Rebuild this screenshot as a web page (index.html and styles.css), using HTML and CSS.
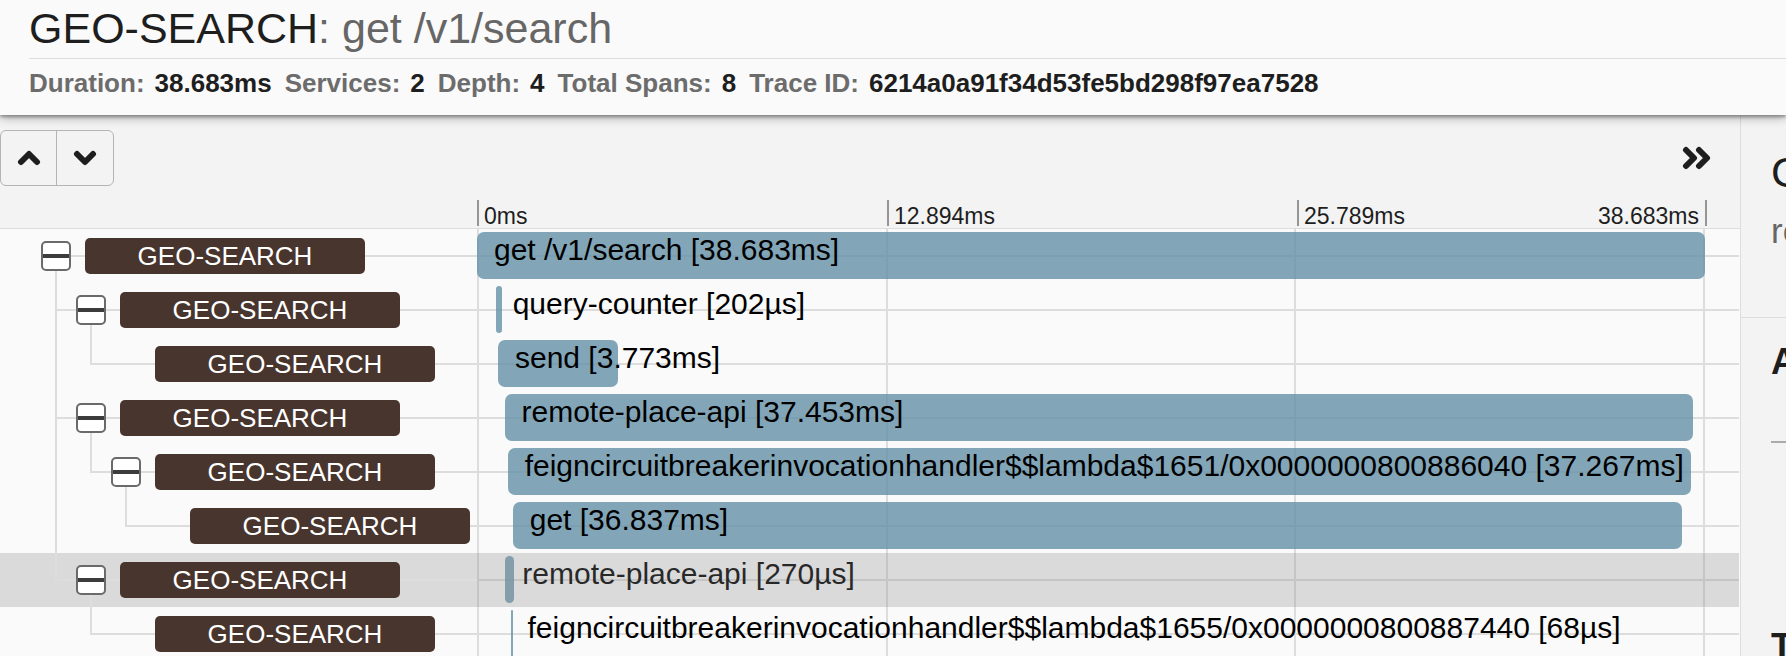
FILE: index.html
```html
<!DOCTYPE html>
<html lang="en">
<head>
<meta charset="utf-8">
<title>GEO-SEARCH: get /v1/search</title>
<link rel="stylesheet" href="styles.css">
</head>
<body>
<header class="header">
  <h1 class="title">GEO-SEARCH<span class="title-span">: get /v1/search</span></h1>
  <dl class="meta">
    <div class="meta-item"><dt>Duration:</dt><dd>38.683ms</dd></div>
    <div class="meta-item"><dt>Services:</dt><dd>2</dd></div>
    <div class="meta-item"><dt>Depth:</dt><dd>4</dd></div>
    <div class="meta-item"><dt>Total Spans:</dt><dd>8</dd></div>
    <div class="meta-item"><dt>Trace ID:</dt><dd>6214a0a91f34d53fe5bd298f97ea7528</dd></div>
  </dl>
</header>
<div class="content">
  <main class="trace">
    <div class="toolbar">
      <div class="button-group">
        <button class="step" type="button" aria-label="Previous span"><svg width="24" height="20" viewBox="0 0 24 20"><path d="M4 14L12 6L20 14"/></svg></button>
        <button class="step" type="button" aria-label="Next span"><svg width="24" height="20" viewBox="0 0 24 20"><path d="M4 6L12 14L20 6"/></svg></button>
      </div>
      <button class="collapse" type="button" aria-label="Hide details"><svg width="30" height="24" viewBox="0 0 30 24"><path d="M4 4L12 12L4 20M17 4L25 12L17 20"/></svg></button>
    </div>
    <div class="scale">
      <div class="ticks">
        <span class="tick">0ms</span>
        <span class="tick">12.894ms</span>
        <span class="tick tick-end"><span>25.789ms</span><span>38.683ms</span></span>
      </div>
    </div>
    <div class="rows">
      <div class="row">
        <div class="tree"><span class="node parent"><button class="toggle" type="button" aria-label="Collapse"></button></span><span class="service">GEO-SEARCH</span><span class="rule"></span></div>
        <div class="timeline"><div class="track"><div class="bar" style="margin-left:0%;width:100%"><span class="name">get /v1/search [38.683ms]</span></div></div></div>
      </div>
      <div class="row">
        <div class="tree"><span class="guide tee"></span><span class="node parent"><button class="toggle" type="button" aria-label="Collapse"></button></span><span class="service">GEO-SEARCH</span><span class="rule"></span></div>
        <div class="timeline"><div class="track"><div class="bar" style="margin-left:1.52%;width:.52%"><span class="name">query-counter [202µs]</span></div></div></div>
      </div>
      <div class="row">
        <div class="tree"><span class="guide line"></span><span class="guide elbow"></span><span class="node"></span><span class="service">GEO-SEARCH</span><span class="rule"></span></div>
        <div class="timeline"><div class="track"><div class="bar" style="margin-left:1.71%;width:9.75%"><span class="name">send [3.773ms]</span></div></div></div>
      </div>
      <div class="row">
        <div class="tree"><span class="guide tee"></span><span class="node parent"><button class="toggle" type="button" aria-label="Collapse"></button></span><span class="service">GEO-SEARCH</span><span class="rule"></span></div>
        <div class="timeline"><div class="track"><div class="bar" style="margin-left:2.24%;width:96.82%"><span class="name">remote-place-api [37.453ms]</span></div></div></div>
      </div>
      <div class="row">
        <div class="tree"><span class="guide line"></span><span class="guide elbow"></span><span class="node parent"><button class="toggle" type="button" aria-label="Collapse"></button></span><span class="service">GEO-SEARCH</span><span class="rule"></span></div>
        <div class="timeline"><div class="track"><div class="bar" style="margin-left:2.5%;width:96.34%"><span class="name">feigncircuitbreakerinvocationhandler$$lambda$1651/0x0000000800886040 [37.267ms]</span></div></div></div>
      </div>
      <div class="row">
        <div class="tree"><span class="guide line"></span><span class="guide"></span><span class="guide elbow"></span><span class="node"></span><span class="service">GEO-SEARCH</span><span class="rule"></span></div>
        <div class="timeline"><div class="track"><div class="bar" style="margin-left:2.91%;width:95.23%"><span class="name">get [36.837ms]</span></div></div></div>
      </div>
      <div class="row selected">
        <div class="tree"><span class="guide elbow"></span><span class="node parent"><button class="toggle" type="button" aria-label="Collapse"></button></span><span class="service">GEO-SEARCH</span><span class="rule"></span></div>
        <div class="timeline"><div class="track"><div class="bar" style="margin-left:2.31%;width:.7%"><span class="name">remote-place-api [270µs]</span></div></div></div>
      </div>
      <div class="row">
        <div class="tree"><span class="guide"></span><span class="guide elbow"></span><span class="node"></span><span class="service">GEO-SEARCH</span><span class="rule"></span></div>
        <div class="timeline"><div class="track"><div class="bar" style="margin-left:2.73%;width:.24%"><span class="name">feigncircuitbreakerinvocationhandler$$lambda$1655/0x0000000800887440 [68µs]</span></div></div></div>
      </div>
    </div>
  </main>
  <aside class="detail">
    <div class="detail-head">
      <h2 class="detail-service">GEO-SEARCH</h2>
      <p class="detail-span">remote-place-api</p>
    </div>
    <section class="annotations"><h3>Annotations</h3></section>
    <section class="tags"><h3>Tags</h3></section>
  </aside>
</div>
</body>
</html>
```
FILE: styles.css
```css
* { box-sizing: border-box; }
body {
  margin: 0;
  height: 100vh;
  display: flex;
  flex-direction: column;
  overflow: hidden;
  background: #f3f3f3;
  color: #1e1e1e;
  font-family: "Liberation Sans", Arial, sans-serif;
}
h1, h2, h3, p, dl, dd { margin: 0; font-weight: 400; }
button { padding: 0; border: 0; background: none; color: inherit; font: inherit; }
svg { display: block; fill: none; stroke: #1e1e1e; stroke-linecap: round; stroke-linejoin: round; stroke-width: 6px; }

.header {
  position: relative;
  z-index: 2;
  flex: none;
  padding: 3px 0 17px 29px;
  background: #fafafa;
  box-shadow: 0 2px 3px rgba(0, 0, 0, .3), 0 2px 10px rgba(0, 0, 0, .35);
}
.title { padding-bottom: 5px; border-bottom: 1px solid #ddd; font-size: 43px; line-height: 50px; white-space: nowrap; }
.title-span { color: #666; }
.meta { display: flex; gap: 13px; padding-top: 9px; font-size: 26px; line-height: 30px; white-space: nowrap; }
.meta-item { display: flex; gap: 10px; font-weight: 700; }
.meta-item dt { color: #6c6c6c; }
.meta-item dd { font-weight: 700; }

.content { flex: 1; display: flex; min-height: 0; }
.trace { flex: 1; min-width: 0; display: flex; flex-direction: column; }
.toolbar { flex: none; display: flex; justify-content: space-between; align-items: center; padding: 15px 28px 14px 0; }
.button-group { display: flex; border: 1px solid #b4b4b4; border-radius: 6px; }
.step { display: grid; place-items: center; width: 55px; height: 54px; }
.step + .step { width: 57px; border-left: 1px solid #b4b4b4; }
.collapse { display: grid; place-items: center; }

.scale { flex: none; padding: 0 33px 2px 477px; border-bottom: 1px solid #ddd; }
.ticks { display: grid; grid-template-columns: repeat(3, 1fr); font-size: 23px; line-height: 23px; }
.tick { height: 26px; padding: 5px 0 0 5px; border-left: 2px solid #959595; }
.tick-end { display: flex; justify-content: space-between; padding-right: 6px; border-right: 2px solid #959595; }

.rows { flex: 1; min-height: 0; overflow: hidden; padding-right: 1px; background: #fafafa; }
.row { display: flex; height: 54px; }
.tree { flex: none; display: flex; align-items: center; width: 477px; padding-left: 55px; }
.guide { flex: none; width: 35px; height: 54px; }
.guide.line, .guide.tee { border-left: 2px solid #ddd; }
.guide.tee { background: linear-gradient(#ddd, #ddd) 0 26px / 100% 2px no-repeat; }
.guide.elbow {
  background:
    linear-gradient(#ddd, #ddd) 0 0 / 2px 28px no-repeat,
    linear-gradient(#ddd, #ddd) 0 26px / 100% 2px no-repeat;
}
.node { flex: none; display: flex; align-items: center; width: 30px; height: 54px; background: linear-gradient(#ddd, #ddd) 0 26px / 100% 2px no-repeat; }
.node.parent {
  background:
    linear-gradient(#ddd, #ddd) 0 26px / 100% 2px no-repeat,
    linear-gradient(#ddd, #ddd) 0 28px / 2px 26px no-repeat;
}
.toggle {
  flex: none;
  width: 30px;
  height: 30px;
  margin-left: -14px;
  border: 2px solid #6a6a6a;
  border-radius: 5px;
  background: linear-gradient(#3c3c3c, #3c3c3c) 0 11px / 100% 4px no-repeat #fff;
}
.service { flex: none; width: 280px; height: 36px; border-radius: 5px; background: #48352e; color: #fff; font-size: 26px; line-height: 36px; text-align: center; }
.rule { flex: 1; height: 2px; background: #ddd; }

.timeline {
  position: relative;
  flex: 1;
  min-width: 0;
  padding-right: 34px;
  background: linear-gradient(#ddd, #ddd) 0 26px / 100% 2px no-repeat;
}
.track {
  height: 54px;
  padding-top: 3px;
  background:
    linear-gradient(#ddd, #ddd) 0 0 / 2px 100% no-repeat,
    linear-gradient(#ddd, #ddd) 33.333% 0 / 2px 100% no-repeat,
    linear-gradient(#ddd, #ddd) 66.667% 0 / 2px 100% no-repeat,
    linear-gradient(#ddd, #ddd) 100% 0 / 2px 100% no-repeat;
}
.bar { height: 47px; border-radius: 7px; background: rgba(100, 145, 168, .8); }
.name { display: block; width: max-content; padding-left: 17px; color: #000; font-size: 30px; line-height: 36px; white-space: nowrap; }
.selected { background: #dadada; }
.selected .timeline { background-color: #fafafa; }
.selected .timeline::after { content: ""; position: absolute; inset: 0; background: rgba(138, 138, 138, .288); }

/* sits above the guide lines of its own row */
.toggle { position: relative; z-index: 1; }

.detail { flex: none; width: 46px; overflow: hidden; border-left: 1px solid #ddd; white-space: nowrap; }
.detail-head { height: 203px; padding: 33px 0 0 30px; border-bottom: 1px solid #ddd; }
.detail-service { font-size: 43px; line-height: 48px; }
.detail-span { padding-top: 15px; color: #666; font-size: 35px; line-height: 40px; }
.detail h3 { font-size: 36px; line-height: 42px; font-weight: 700; }
.annotations { height: 125px; margin-left: 30px; padding-top: 23px; border-bottom: 2px solid #aaa; }
.tags { margin-left: 30px; padding-top: 183px; }
```
